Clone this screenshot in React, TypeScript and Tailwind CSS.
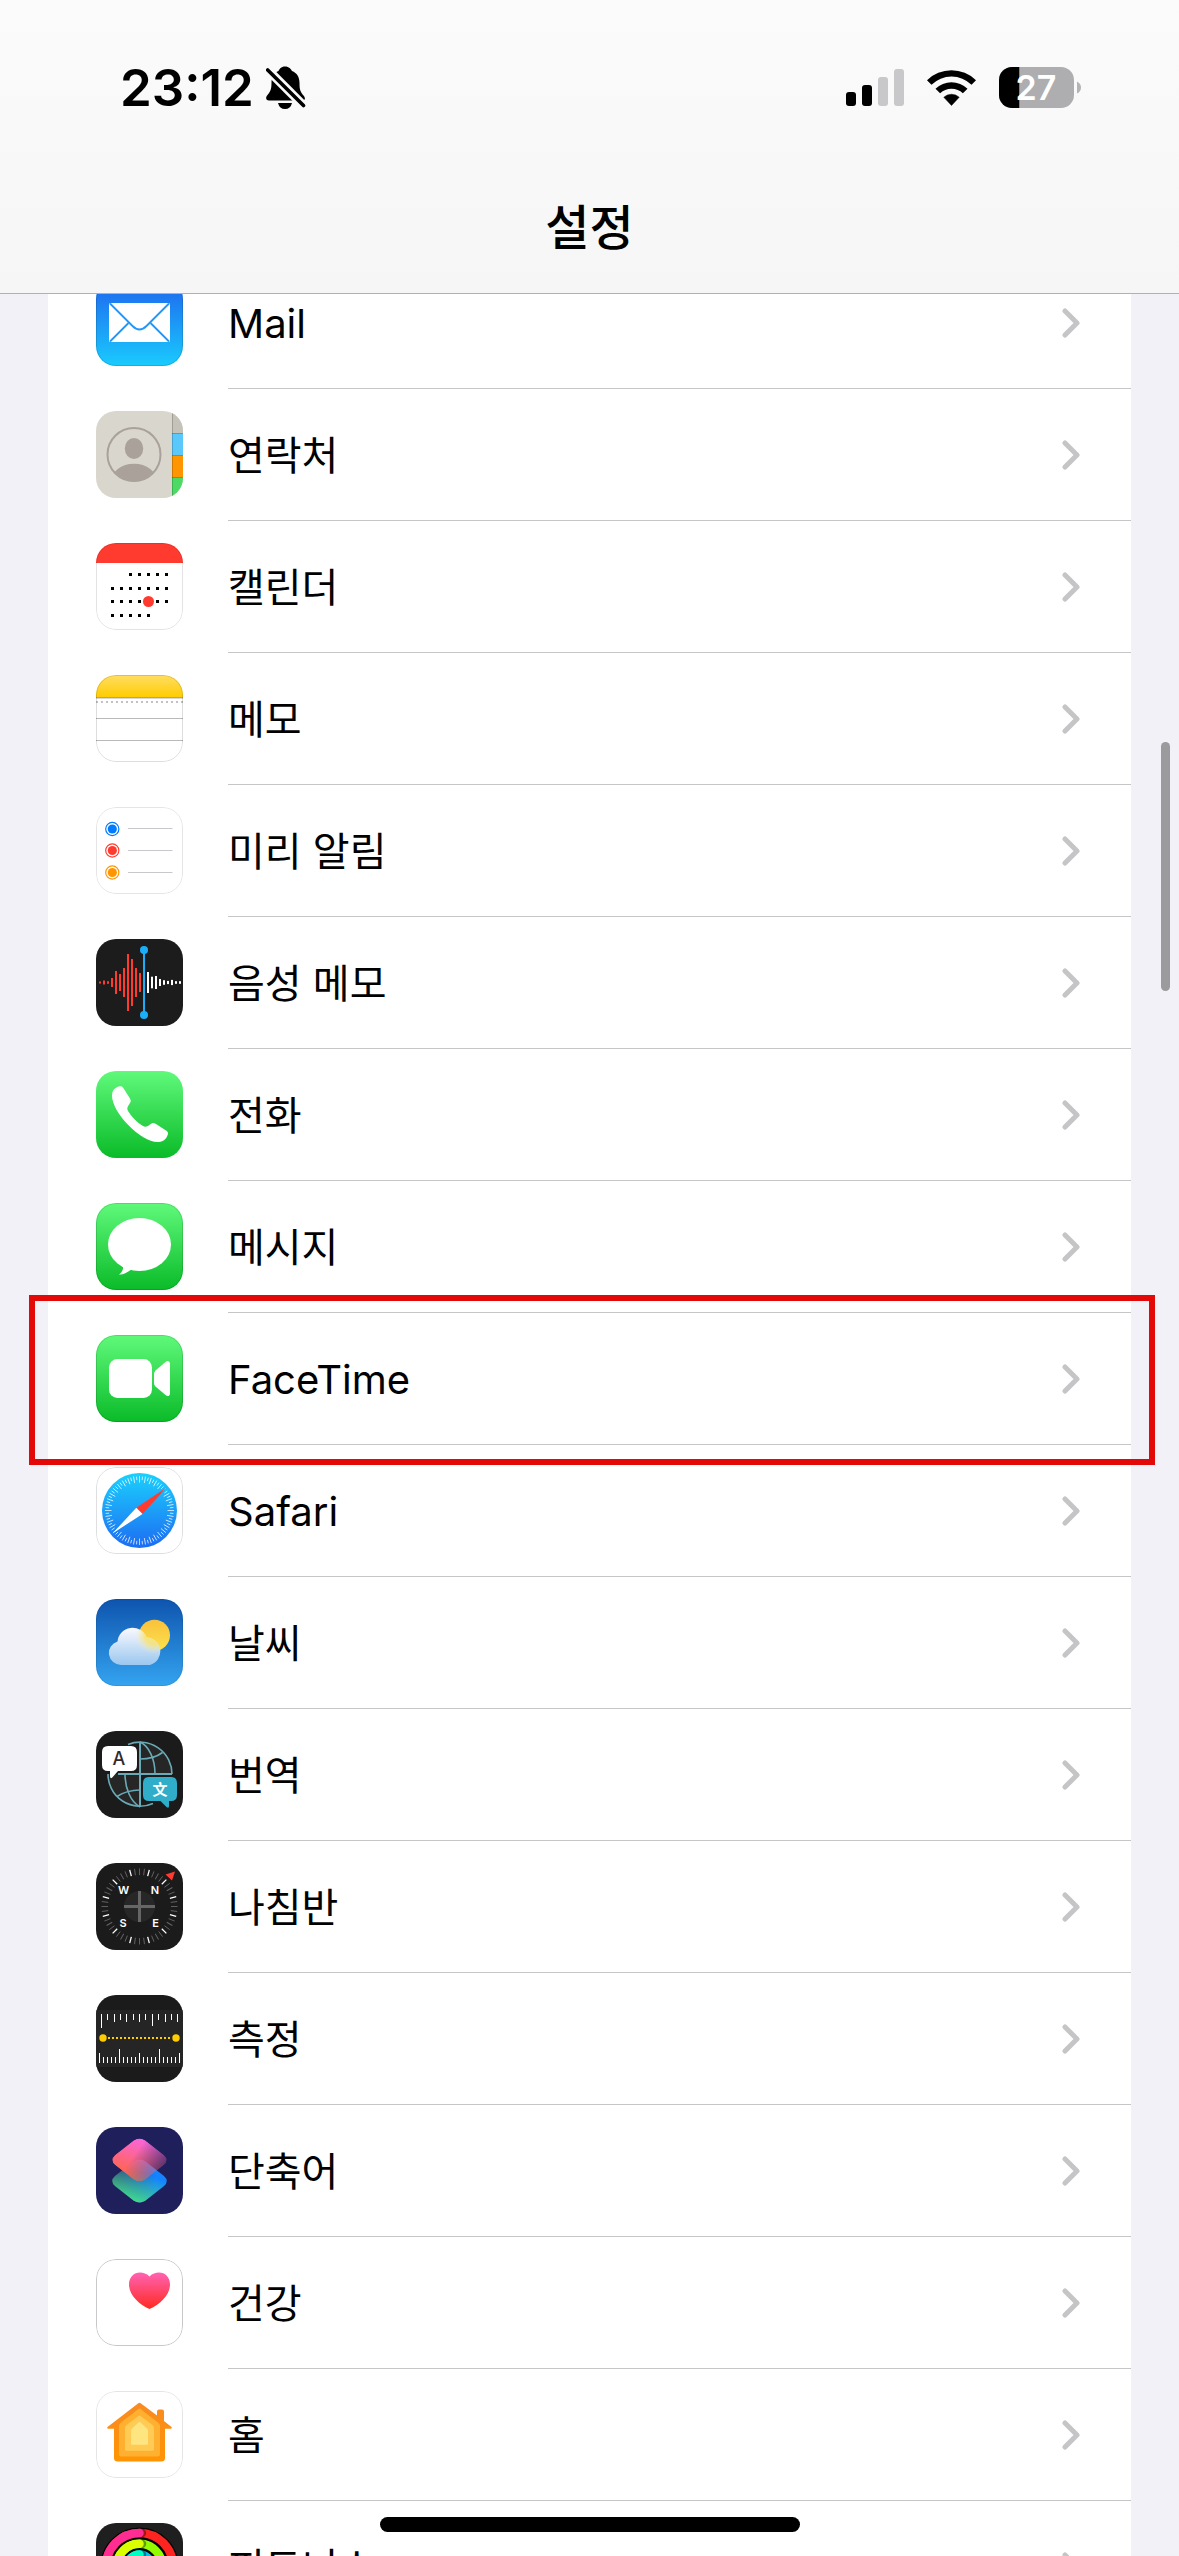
import { ReactNode } from 'react';
import { clsx } from 'clsx';

interface TileProps {
  className?: string;
  outline?: string;
  children: ReactNode;
}

function Tile({ className, outline, children }: TileProps) {
  return (
    <svg viewBox="0 0 87 87" aria-hidden="true" className={clsx('size-[87px] rounded-[20px]', className)}>
      {children}
      {outline && <rect x="0.5" y="0.5" width="86" height="86" rx="19.5" fill="none" stroke={outline} />}
    </svg>
  );
}

function Gradient({ id, from, to }: { id: string; from: string; to: string }) {
  return (
    <linearGradient id={id} x1="0" y1="0" x2="0" y2="1">
      <stop offset="0" stopColor={from} />
      <stop offset="1" stopColor={to} />
    </linearGradient>
  );
}

function MailIcon() {
  return (
    <Tile outline="#00000022">
      <Gradient id="mail-bg" from="#1e63ee" to="#1acbfd" />
      <rect width="87" height="87" fill="url(#mail-bg)" />
      <rect x="13" y="24" width="61" height="39" rx="1.5" fill="#fff" />
      <g fill="none" stroke="#2596f9" strokeWidth="1.8">
        <path d="M14 24.500L36.500 47Q43.500 54 50.500 47L73 24.500" />
        <path d="M14 62.500L32.500 44M73 62.500L54.500 44" />
      </g>
    </Tile>
  );
}

function ContactsIcon() {
  return (
    <Tile>
      <clipPath id="contacts-clip">
        <circle cx="38" cy="43.500" r="27" />
      </clipPath>
      <rect width="87" height="87" fill="#d9d6cd" />
      <rect x="76" width="11" height="22" fill="#c5c2ba" />
      <rect x="76" y="22" width="11" height="22" fill="#5ac8fa" />
      <rect x="76" y="44" width="11" height="22" fill="#ff9500" />
      <rect x="76" y="66" width="11" height="21" fill="#4cd964" />
      <path d="M76 22.500H87M76 44.500H87M76 66.500H87M76.500 0V87" stroke="#00000030" />
      <circle cx="38" cy="43.500" r="26.500" fill="none" stroke="#a9a19a" strokeWidth="2" />
      <ellipse cx="38" cy="37.500" rx="9.200" ry="10.500" fill="#a9a19a" />
      <ellipse cx="38" cy="71" rx="23" ry="18.300" fill="#a9a19a" clipPath="url(#contacts-clip)" />
    </Tile>
  );
}

function CalendarIcon() {
  const weeks = [
    { y: 30, days: [2, 3, 4, 5, 6] },
    { y: 44, days: [0, 1, 2, 3, 4, 5, 6] },
    { y: 57, days: [0, 1, 2, 3, 5, 6] },
    { y: 71, days: [0, 1, 2, 3, 4] },
  ];
  return (
    <Tile outline="#0000001c">
      <rect width="87" height="87" fill="#fff" />
      <rect width="87" height="20" fill="#ff3b30" />
      {weeks.map((week) =>
        week.days.map((day) => <rect key={`${week.y}-${day}`} x={15 + day * 9} y={week.y} width="3" height="3" />)
      )}
      <circle cx="52.500" cy="58.500" r="5.500" fill="#ff3b30" />
    </Tile>
  );
}

function NotesIcon() {
  return (
    <Tile outline="#00000022">
      <Gradient id="notes-top" from="#ffde64" to="#ffcc02" />
      <rect width="87" height="87" fill="#fff" />
      <rect width="87" height="22" fill="url(#notes-top)" />
      <path d="M0 22.500H87" stroke="#a8a595" />
      <path d="M0 23.500H87" stroke="#d8d8d8" />
      <path d="M0 27H87" stroke="#c2c2c4" strokeWidth="2" strokeDasharray="2 3" />
      <path d="M0 43.500H87M0 65.500H87" stroke="#b9b9bb" />
    </Tile>
  );
}

function RemindersIcon() {
  const rows = [
    { y: 22, color: '#007aff' },
    { y: 43.5, color: '#ff3b30' },
    { y: 65.5, color: '#ff9500' },
  ];
  return (
    <Tile outline="#e5e5e5">
      <rect width="87" height="87" fill="#fff" />
      {rows.map((row) => (
        <g key={row.color}>
          <circle cx="16.300" cy={row.y} r="6.600" fill="none" stroke={row.color} strokeWidth="1.200" />
          <circle cx="16.300" cy={row.y} r="4.600" fill={row.color} />
          <path d={`M32 ${Math.floor(row.y - 0.1) + 0.5}H76.500`} stroke="#c7c7cc" />
        </g>
      ))}
    </Tile>
  );
}

function VoiceMemosIcon() {
  const recorded = [1, 2, 1.3, 4.5, 11.5, 8.5, 14.5, 28.5, 23.5, 14.5, 9.5];
  const upcoming = [10.5, 5.8, 6.5, 3.5, 2.3, 1.6, 2.6, 1.3, 1.3];
  return (
    <Tile>
      <rect width="87" height="87" fill="#1c1c1c" />
      {recorded.map((h, i) => (
        <rect key={i} x={3 + i * 4} y={43.5 - h} width="2" height={h * 2} fill="#ff3b30" />
      ))}
      {upcoming.map((h, i) => (
        <rect key={i} x={51 + i * 4} y={43.5 - h} width="2" height={h * 2} fill="#fff" />
      ))}
      <path d="M48 11V76" stroke="#1badf8" strokeWidth="2" />
      <circle cx="48" cy="11" r="4" fill="#1badf8" />
      <circle cx="48" cy="76" r="4" fill="#1badf8" />
    </Tile>
  );
}

function PhoneIcon() {
  return (
    <Tile>
      <Gradient id="phone-bg" from="#60f97b" to="#0abb28" />
      <rect width="87" height="87" fill="url(#phone-bg)" />
      <path
        fill="#fff"
        d="M20.500 16.500C23 15 25.500 14.500 27 16.500L34 27.500C35.500 30 34.500 31.500 33 33.500C31.500 36 30.500 37.500 32 40C35.500 45.500 41 51.500 47 55C49.500 56.500 51.500 55.500 54 53.500C56 52 57.500 51.300 60 53L70 59.500C72.500 61 72.500 62.500 71 65.500C69 69.500 66 71 61.500 71C45 71 16 42 16 24.500C16 20.500 17.500 18 20.500 16.500Z"
      />
    </Tile>
  );
}

function MessagesIcon() {
  return (
    <Tile outline="#00000022">
      <Gradient id="messages-bg" from="#60f97b" to="#0abb28" />
      <rect width="87" height="87" fill="url(#messages-bg)" />
      <ellipse cx="43.500" cy="41.500" rx="31.500" ry="26.500" fill="#fff" />
      <path fill="#fff" d="M27 63C27.500 67 25.500 69.500 23 71.500C27 72 31 69.500 35.500 66.500Z" />
    </Tile>
  );
}

function FaceTimeIcon() {
  return (
    <Tile outline="#00000022">
      <Gradient id="facetime-bg" from="#60f97b" to="#0abb28" />
      <rect width="87" height="87" fill="url(#facetime-bg)" />
      <rect x="13" y="24" width="43" height="39" rx="8.500" fill="#fff" />
      <path
        fill="#fff"
        d="M58 39Q58 37 59.500 35.500L69.500 27Q71.500 25.500 73 26.500Q74 27.200 74 29V58Q74 60 73 60.700Q71.500 61.500 69.500 60L59.500 51.500Q58 50 58 48Z"
      />
    </Tile>
  );
}

function SafariIcon() {
  return (
    <Tile outline="#dfdfdf">
      <Gradient id="safari-dial" from="#1bd0fd" to="#1d6cf2" />
      <rect width="87" height="87" fill="#fff" />
      <circle cx="43.500" cy="43.500" r="37.500" fill="url(#safari-dial)" />
      {Array.from({ length: 72 }, (_, i) => (
        <path
          key={i}
          d={i % 2 ? 'M43.5 9.5V13' : 'M43.5 9V15.5'}
          stroke="#fff"
          strokeWidth="0.700"
          transform={`rotate(${i * 5} 43.5 43.5)`}
        />
      ))}
      <path fill="#ff3b30" d="M70.500 20.500L40.300 40.700L46.500 47Z" />
      <path fill="#fff" d="M16.500 66.500L40.300 40.700L46.500 47Z" />
    </Tile>
  );
}

function WeatherIcon() {
  return (
    <Tile outline="#00000014">
      <Gradient id="weather-bg" from="#0e54ae" to="#34a4f0" />
      <Gradient id="weather-sun" from="#f8c13c" to="#fde34d" />
      <linearGradient id="weather-cloud" gradientUnits="userSpaceOnUse" x1="0" y1="28" x2="0" y2="66">
        <stop offset="0" stopColor="#fbfaff" />
        <stop offset="1" stopColor="#9bc7ef" />
      </linearGradient>
      <radialGradient id="weather-glow">
        <stop offset="0.500" stopColor="#fbe36a" stopOpacity="0.800" />
        <stop offset="1" stopColor="#f6ecc0" stopOpacity="0" />
      </radialGradient>
      <clipPath id="weather-clip">
        <path d="M25 66A12 12 0 0 1 21.500 42.500A15 15 0 0 1 50.500 38.500A14 14 0 0 1 54 66Z" />
      </clipPath>
      <rect width="87" height="87" fill="url(#weather-bg)" />
      <circle cx="58.500" cy="36.300" r="15.500" fill="url(#weather-sun)" />
      <g clipPath="url(#weather-clip)">
        <rect x="10" y="25" width="62" height="44" fill="url(#weather-cloud)" />
        <circle cx="58" cy="36" r="19" fill="url(#weather-glow)" />
      </g>
    </Tile>
  );
}

function TranslateIcon() {
  return (
    <Tile>
      <rect width="87" height="87" fill="#1b1b1b" />
      <path d="M44 43V11A32 32 0 0 1 76 43ZM44 43V76A32 32 0 0 1 12 43Z" fill="#262626" />
      <g fill="none" stroke="#6aaab6" strokeWidth="1.600">
        <path d="M32 13.500A32 32 0 0 1 76 43M12 43A32 32 0 0 0 57 72.500" />
        <path d="M44 11C53 15 59 28 59 43M44 76C35 71 29 58 29 43" />
        <path d="M44 28Q58 28 66.500 21.500M44 59Q31 59 21 65.500" />
        <path d="M44 11V76M22 43H76" strokeWidth="2" />
      </g>
      <path
        fill="#fff"
        d="M12 15H35Q41 15 41 21V34Q41 40 35 40H22L16.500 46.300Q14 48.500 14 45V40H12Q6 40 6 34V21Q6 15 12 15Z"
      />
      <path
        fill="#30aec9"
        d="M53 46H75Q81 46 81 52V64Q81 70 75 70H73V75Q73 78 70.500 76L64.500 70H53Q47 70 47 64V52Q47 46 53 46Z"
      />
      <text x="23" y="34" textAnchor="middle" fontSize="18" fill="#2b2b2b" className="font-['Inter'] font-medium">
        A
      </text>
      <text x="64" y="64" textAnchor="middle" fontSize="15" fill="#fff" className="font-['Noto_Sans_CJK_SC'] font-bold">
        文
      </text>
    </Tile>
  );
}

function CompassIcon() {
  const letters = [
    { label: 'W', x: 27.5, y: 31 },
    { label: 'N', x: 59, y: 31 },
    { label: 'S', x: 27, y: 64 },
    { label: 'E', x: 59.5, y: 64 },
  ];
  return (
    <Tile>
      <rect width="87" height="87" fill="#1b1b1b" />
      {Array.from({ length: 48 }, (_, i) => (
        <path
          key={i}
          d="M43.5 5.5V12"
          stroke={i % 4 === 2 ? '#fff' : '#666'}
          strokeWidth={i % 4 === 2 ? 1.3 : 0.9}
          transform={`rotate(${i * 7.5} 43.5 43.5)`}
        />
      ))}
      <circle cx="43.500" cy="43.500" r="15.500" fill="#272727" />
      <path d="M43.500 28V59M28 43.500H59" stroke="#666" strokeWidth="3" />
      {letters.map((letter) => (
        <text
          key={letter.label}
          x={letter.x}
          y={letter.y}
          textAnchor="middle"
          fontSize="11"
          fill="#fff"
          className="font-['Inter'] font-semibold"
        >
          {letter.label}
        </text>
      ))}
      <path d="M69.500 11.500L79 8.500L76 17.500Z" fill="#ff3b30" />
    </Tile>
  );
}

function MeasureIcon() {
  const top = [14, 6, 8, 6, 8, 6, 8, 6, 12, 6, 8, 6, 8];
  return (
    <Tile>
      <rect width="87" height="87" fill="#1b1b1b" />
      <rect y="15" width="87" height="57" fill="#252525" />
      {top.map((h, i) => (
        <rect key={i} x={5 + Math.round(i * 6.35)} y="19" width="1" height={h} fill="#fff" />
      ))}
      {Array.from({ length: 21 }, (_, i) => {
        const h = i % 10 === 5 ? 14 : i % 10 === 0 ? 10 : 6;
        return <rect key={i} x={3 + i * 4} y={68 - h} width="1" height={h} fill="#fff" />;
      })}
      <path d="M12 43H76" stroke="#ffcc00" strokeWidth="2" strokeDasharray="2 2" />
      <circle cx="7" cy="43" r="3.700" fill="#ffcc00" />
      <circle cx="80" cy="43" r="3.700" fill="#ffcc00" />
    </Tile>
  );
}

function ShortcutsIcon() {
  const diamond =
    'M-6 -19.500Q0 -23.500 6 -19.500L24.500 -5Q30 0 24.500 5L6 19.500Q0 23.500 -6 19.500L-24.500 5Q-30 0 -24.500 -5Z';
  return (
    <Tile>
      <linearGradient id="shortcuts-low" x1="0" y1="0.300" x2="1" y2="0.300">
        <stop offset="0" stopColor="#34406a" />
        <stop offset="0.800" stopColor="#1483ff" />
      </linearGradient>
      <linearGradient id="shortcuts-green" x1="0.350" y1="1" x2="0.650" y2="0.350">
        <stop offset="0" stopColor="#43e38c" />
        <stop offset="1" stopColor="#43e38c" stopOpacity="0" />
      </linearGradient>
      <linearGradient id="shortcuts-high" x1="0.600" y1="0" x2="0.250" y2="0.800">
        <stop offset="0" stopColor="#f966e0" />
        <stop offset="1" stopColor="#ff6450" />
      </linearGradient>
      <linearGradient id="shortcuts-fade" x1="0.450" y1="0.300" x2="1" y2="0.600">
        <stop offset="0" stopColor="#fff" />
        <stop offset="1" stopColor="#444" />
      </linearGradient>
      <mask id="shortcuts-mask" maskUnits="userSpaceOnUse" x="-32" y="-26" width="64" height="52">
        <path d={diamond} fill="url(#shortcuts-fade)" />
      </mask>
      <rect width="87" height="87" fill="#1e1f5b" />
      <g transform="translate(43.5 54)">
        <path d={diamond} fill="url(#shortcuts-low)" />
        <path d={diamond} fill="url(#shortcuts-green)" />
      </g>
      <g transform="translate(43.5 33)">
        <path d={diamond} fill="url(#shortcuts-high)" mask="url(#shortcuts-mask)" />
      </g>
    </Tile>
  );
}

function HealthIcon() {
  return (
    <Tile outline="#c8c8ca">
      <Gradient id="health-heart" from="#ff63b4" to="#ff2a20" />
      <rect width="87" height="87" fill="#fff" />
      <path
        fill="url(#health-heart)"
        d="M53.500 17.500C50.500 14.500 47.500 13.500 44 13.500C38 13.500 33 18 33 25.500C33 36 43 45.500 53.500 50C64 45.500 74 36 74 25.500C74 18 69 13.500 63 13.500C59.500 13.500 56.500 14.500 53.500 17.500Z"
      />
    </Tile>
  );
}

function HomeIcon() {
  return (
    <Tile outline="#e5e5e5">
      <Gradient id="home-roof" from="#f98a22" to="#ff9502" />
      <rect width="87" height="87" fill="#fff" />
      <path
        fill="url(#home-roof)"
        d="M42 12.500Q43.500 11 45 12.500L61 24.500V20.500Q61 18.500 63 18.500H66Q68 18.500 68 20.500V30L75.500 36Q76.500 37.700 74.500 37.700H69V67Q69 70.500 65.500 70.500H21.500Q18 70.500 18 67V37.700H12.500Q10.500 37.700 11.500 36Z"
      />
      <path
        fill="#ffb030"
        d="M42.500 18Q43.500 17 44.500 18L62 31.500Q64 33 64 35V63.500Q64 65.500 62 65.500H25Q23 65.500 23 63.500V35Q23 33 25 31.500Z"
      />
      <path
        fill="#ffcb54"
        d="M42.500 25Q43.500 24 44.500 25L56.500 34Q58 35 58 37V58.500Q58 59.700 56.500 59.700H30.500Q29 59.700 29 58.500V37Q29 35 30.500 34Z"
      />
      <path
        fill="#ffe580"
        d="M42.500 31.500Q43.500 30.700 44.500 31.500L51 37.500Q52 38.500 52 40V52.500Q52 53.700 51 53.700H36Q35 53.700 35 52.500V40Q35 38.500 36 37.500Z"
      />
    </Tile>
  );
}

function FitnessIcon() {
  const rings = [
    { r: 33.5, left: '#ff2d92', right: '#ff2420' },
    { r: 22.7, left: '#d9ff00', right: '#94fc00' },
    { r: 12, left: '#00ffc0', right: '#00c4f0' },
  ];
  return (
    <Tile>
      <rect width="87" height="87" fill="#1f1f1f" />
      {rings.map((ring) => (
        <g key={ring.r} fill="none">
          <circle cx="43.500" cy="43.500" r={ring.r} stroke="#000" strokeWidth="11" />
          <circle cx="43.500" cy="43.500" r={ring.r} stroke={ring.right} strokeWidth="8.500" />
          <path d={`M46 ${43.5 - ring.r}h.01`} stroke="#00000060" strokeWidth="8.500" strokeLinecap="round" />
          <path
            d={`M43.5 ${43.5 + ring.r}A${ring.r} ${ring.r} 0 0 1 43.5 ${43.5 - ring.r}`}
            stroke={ring.left}
            strokeWidth="8.500"
            strokeLinecap="round"
          />
        </g>
      ))}
    </Tile>
  );
}

function SilentBell() {
  return (
    <svg viewBox="0 0 40 44" role="img" aria-label="무음 모드" className="h-11 w-10">
      <path d="M19 .5C23 .5 25 3 26 5C31 7 33.500 11 33.500 17C33.500 24 34.500 26 37.500 29.500C40 32.500 39 34.500 36 34.500H3C-.5 34.500-.5 31 1.500 29C4.500 25.500 5.500 23 5.500 17C5.500 11 8 7 12.500 5C13.500 3 15 .5 19 .5Z" />
      <path d="M12 37H26Q24.500 43 19 43Q13.500 43 12 37Z" />
      <path d="M-1 1L37.500 39.500" stroke="#f9f9fb" strokeWidth="9" />
      <path d="M1.700 4L37.500 39.500" stroke="#000" strokeWidth="3.600" strokeLinecap="round" />
    </svg>
  );
}

function SignalBars() {
  return (
    <svg viewBox="0 0 58 37" role="img" aria-label="신호 세기" className="h-[37px] w-[58px]">
      <rect y="23" width="10" height="14" rx="3" />
      <rect x="16" y="16" width="10" height="21" rx="3" />
      <rect x="32" y="8" width="10" height="29" rx="3" fill="#c8c8ca" />
      <rect x="48" width="10" height="37" rx="3" fill="#c8c8ca" />
    </svg>
  );
}

function WifiIcon() {
  return (
    <svg viewBox="0 0 50 37" role="img" aria-label="Wi-Fi" className="h-[37px] w-[51px]">
      <path d="M.5 11.200A35 35 0 0 1 49.500 11.200L45 15.700A28.500 28.500 0 0 0 5 15.700Z" />
      <path d="M9 19.700A23 23 0 0 1 41 19.700L36.400 24.300A16.500 16.500 0 0 0 13.600 24.300Z" />
      <path d="M17.300 28.200A11.500 11.500 0 0 1 32.700 28.200L25 36.500Z" strokeLinejoin="round" stroke="#000" strokeWidth=".500" />
    </svg>
  );
}

function Battery({ level }: { level: number }) {
  return (
    <svg viewBox="0 0 82 41" role="img" aria-label="배터리" className="h-[41px] w-[82px]">
      <clipPath id="battery-clip">
        <rect width="75" height="41" rx="13" />
      </clipPath>
      <g clipPath="url(#battery-clip)">
        <rect width="75" height="41" fill="#aeaeb0" />
        <rect width={level * 0.75} height="41" />
      </g>
      <path d="M78 14.500Q82 16.500 82 20.500Q82 24.500 78 26.500Z" fill="#b4b4b6" />
      <text x="37" y="33" textAnchor="middle" fontSize="34" fill="#fff" className="font-['Inter'] font-semibold">
        {level}
      </text>
    </svg>
  );
}

function Chevron() {
  return (
    <svg viewBox="0 0 18 30" aria-hidden="true" className="h-[30px] w-[18px]">
      <path d="M3 3L15 15L3 27" fill="none" stroke="#c5c5c7" strokeWidth="5" strokeLinecap="round" strokeLinejoin="round" />
    </svg>
  );
}

interface SettingsItem {
  label: string;
  icon: ReactNode;
  highlighted?: boolean;
}

const items: SettingsItem[] = [
  { label: 'Mail', icon: <MailIcon /> },
  { label: '연락처', icon: <ContactsIcon /> },
  { label: '캘린더', icon: <CalendarIcon /> },
  { label: '메모', icon: <NotesIcon /> },
  { label: '미리 알림', icon: <RemindersIcon /> },
  { label: '음성 메모', icon: <VoiceMemosIcon /> },
  { label: '전화', icon: <PhoneIcon /> },
  { label: '메시지', icon: <MessagesIcon /> },
  { label: 'FaceTime', icon: <FaceTimeIcon />, highlighted: true },
  { label: 'Safari', icon: <SafariIcon /> },
  { label: '날씨', icon: <WeatherIcon /> },
  { label: '번역', icon: <TranslateIcon /> },
  { label: '나침반', icon: <CompassIcon /> },
  { label: '측정', icon: <MeasureIcon /> },
  { label: '단축어', icon: <ShortcutsIcon /> },
  { label: '건강', icon: <HealthIcon /> },
  { label: '홈', icon: <HomeIcon /> },
  { label: '피트니스', icon: <FitnessIcon /> },
];

function SettingsRow({ label, icon, highlighted }: SettingsItem) {
  return (
    <li className="relative">
      <a href="#" className="flex items-center gap-[45px] pl-12">
        <span className="pb-px">{icon}</span>
        <span className="flex h-[132px] flex-1 items-center justify-between border-b border-[#c6c6c8] pr-[51px]">
          <span className="pt-0.5 text-[40px] leading-none">{label}</span>
          <Chevron />
        </span>
      </a>
      {highlighted && <div className="absolute -top-[18px] -right-6 -bottom-5 -left-[19px] z-10 border-6 border-[#e30909]" />}
    </li>
  );
}

export default function App() {
  return (
    <div className="relative flex h-screen flex-col overflow-hidden bg-[#f2f1f7] font-['Inter','Noto_Sans_CJK_KR',sans-serif] text-black">
      <header className="relative z-20 border-b border-[#b0b0b3] bg-linear-to-b from-[#fbfbfc] to-[#f6f6f7] pb-3">
        <div className="flex h-[175px] items-center justify-between pr-[98px] pl-[120px]">
          <div className="flex items-center gap-3">
            <time className="text-[51px] leading-none font-semibold">23:12</time>
            <SilentBell />
          </div>
          <div className="flex items-center gap-[22px]">
            <SignalBars />
            <WifiIcon />
            <Battery level={27} />
          </div>
        </div>
        <h1 className="flex h-[106px] items-center justify-center text-5xl leading-none font-medium">설정</h1>
      </header>

      <main className="-mt-[37px] px-12">
        <ul className="bg-white">
          {items.map((item) => (
            <SettingsRow key={item.label} {...item} />
          ))}
        </ul>
      </main>

      {/* Scroll thumb */}
      <div className="absolute top-[742px] right-[9px] h-[249px] w-[9px] rounded-full bg-[#9b9b9d]" />
      {/* Home indicator */}
      <div className="absolute bottom-6 left-1/2 z-20 h-[15px] w-[420px] -translate-x-1/2 rounded-full bg-black" />
    </div>
  );
}
